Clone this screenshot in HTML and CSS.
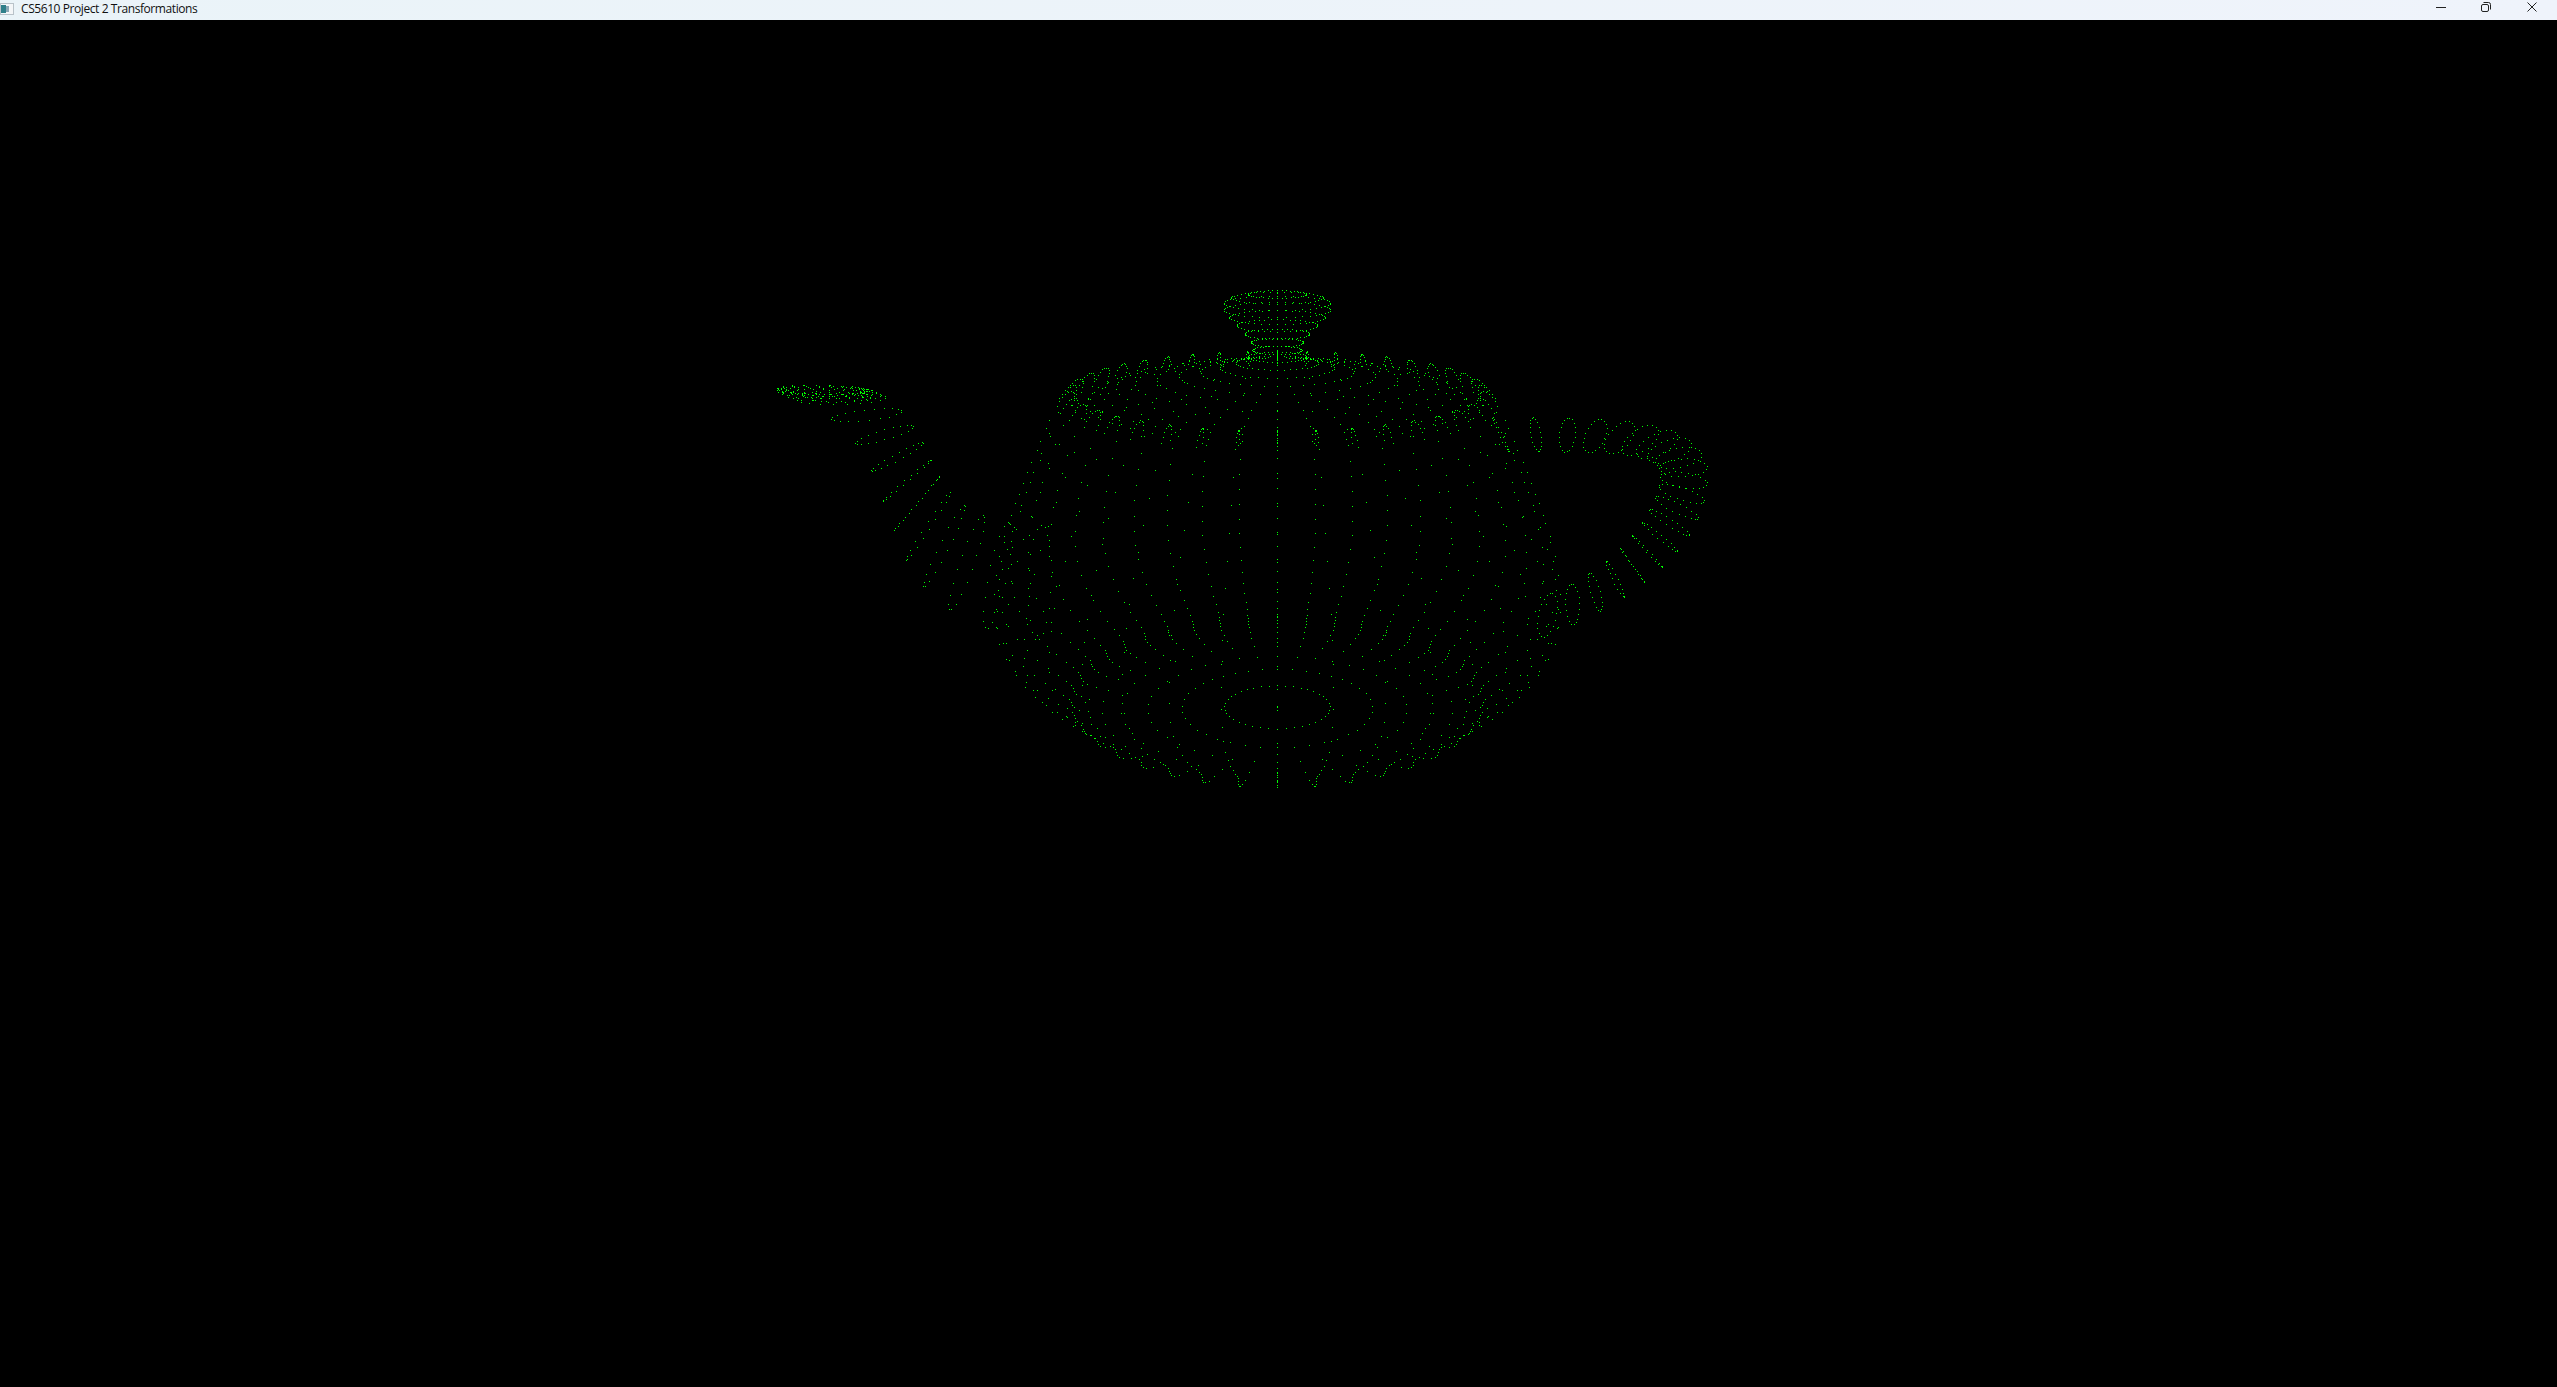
FILE: index.html
```html
<!DOCTYPE html>
<html lang="en">
<head>
<meta charset="utf-8">
<title>CS5610 Project 2 Transformations</title>
<link rel="stylesheet" href="styles.css">
</head>
<body>
<div class="window">
  <header class="titlebar">
    <div class="title-left">
      <svg class="app-icon" width="14" height="14" viewBox="0 0 14 14">
        <rect x="0.5" y="1.5" width="13" height="11" fill="#f4f6f8" stroke="#b9c2c9"/>
        <rect x="1" y="3" width="5" height="8" fill="#2f7f8a"/>
        <rect x="6" y="4" width="3" height="6" fill="#8aa7b5"/>
      </svg>
      <span class="title-text">CS5610 Project 2 Transformations</span>
    </div>
    <div class="controls">
      <svg class="ctl" width="46" height="20" viewBox="0 0 46 20"><path d="M18 7.5H28" stroke="#222" fill="none"/></svg>
      <svg class="ctl" width="46" height="20" viewBox="0 0 46 20"><path d="M19 4.5h4a1.5 1.5 0 0 1 1.5 1.5v4a1.5 1.5 0 0 1 -1.5 1.5h-4a1.5 1.5 0 0 1 -1.5 -1.5v-4a1.5 1.5 0 0 1 1.5 -1.5z M19.5 2.5h5a2 2 0 0 1 2 2v5" stroke="#222" fill="none"/></svg>
      <svg class="ctl" width="46" height="20" viewBox="0 0 46 20"><path d="M17.5 2.5L26.5 11.5M26.5 2.5L17.5 11.5" stroke="#222" fill="none"/></svg>
    </div>
  </header>
  <canvas id="view" class="viewport" width="2557" height="1367"></canvas>
</div>
<script src="main.js"></script>
</body>
</html>
```
FILE: styles.css
```css
html, body {
  margin: 0;
  padding: 0;
  height: 100%;
  background: #000;
  overflow: hidden;
}
.window {
  display: flex;
  flex-direction: column;
  height: 100%;
}
.titlebar {
  flex: 0 0 20px;
  height: 20px;
  display: flex;
  justify-content: space-between;
  background: linear-gradient(90deg, #eaf3f8, #eff3fb);
}
.title-left {
  display: flex;
  align-items: flex-start;
  gap: 7px;
}
.app-icon {
  margin-top: 2px;
}
.title-text {
  font: 12px/18px "Open Sans", "Noto Sans", sans-serif;
  color: #111;
  letter-spacing: -0.42px;
}
.controls {
  display: flex;
  gap: 0;
  margin-right: 1px;
}
.ctl {
  display: block;
}
.viewport {
  display: block;
  flex: 1 1 auto;
  background: #000;
}
```
FILE: main.js
```js
// Utah teapot drawn as a point cloud: every Bezier patch sampled on a regular grid.
var CAM = { cx: 1277, cy: 499, dist: 10, elev: 17, focal: 1414, target: 1.5, aspect: 0.965 };
var N = 10;
var K = 0.56;

function bez(t) {
  var s = 1 - t;
  return [s * s * s, 3 * s * s * t, 3 * s * t * t, t * t * t];
}

function samplePatch(rows, out) {
  for (var i = 0; i <= N; i++) {
    var bu = bez(i / N);
    for (var j = 0; j <= N; j++) {
      var bv = bez(j / N);
      var p = [0, 0, 0];
      for (var a = 0; a < 4; a++) {
        for (var b = 0; b < 4; b++) {
          var w = bu[a] * bv[b];
          p[0] += w * rows[a][b][0];
          p[1] += w * rows[a][b][1];
          p[2] += w * rows[a][b][2];
        }
      }
      out.push(p);
    }
  }
}

function revolve(profile, out) {
  var signs = [[1, 1], [-1, 1], [-1, -1], [1, -1]];
  signs.forEach(function (s) {
    var rows = profile.map(function (q) {
      var r = q[0], z = q[1];
      return [
        [s[0] * r, 0, z],
        [s[0] * r, s[1] * K * r, z],
        [s[0] * K * r, s[1] * r, z],
        [0, s[1] * r, z]
      ];
    });
    samplePatch(rows, out);
  });
}

function tube(rows, out) {
  [1, -1].forEach(function (s) {
    var m = rows.map(function (q) {
      return [
        [q[0], 0, q[2]],
        [q[0], s * q[4], q[2]],
        [q[1], s * q[4], q[3]],
        [q[1], 0, q[3]]
      ];
    });
    samplePatch(m, out);
  });
}

var pts = [];
revolve([[1.4, 2.4], [1.3375, 2.53125], [1.4375, 2.53125], [1.5, 2.4]], pts);
revolve([[1.5, 2.4], [1.75, 1.875], [2, 1.35], [2, 0.9]], pts);
revolve([[2, 0.9], [2, 0.45], [1.5, 0.225], [1.5, 0.15]], pts);
revolve([[0.001, 3.15], [0.8, 3.15], [0.001, 2.85], [0.2, 2.7]], pts);
revolve([[0.2, 2.7], [0.4, 2.55], [1.3, 2.55], [1.3, 2.4]], pts);
revolve([[0.001, 0], [1.425, 0], [1.5, 0.075], [1.5, 0.15]], pts);
tube([
  [-1.6, -1.5, 2.025, 2.25, 0.3],
  [-2.3, -2.5, 2.025, 2.25, 0.3],
  [-2.7, -3, 2.025, 2.25, 0.3],
  [-2.7, -3, 1.8, 1.8, 0.3]
], pts);
tube([
  [-2.7, -3, 1.8, 1.8, 0.3],
  [-2.7, -3, 1.575, 1.35, 0.3],
  [-2.5, -2.65, 1.125, 0.9375, 0.3],
  [-2, -1.9, 0.9, 0.6, 0.3]
], pts);
tube([
  [1.7, 1.7, 1.425, 0.6, 0.66],
  [2.6, 3.1, 1.425, 0.825, 0.66],
  [2.3, 2.4, 2.1, 2.025, 0.25],
  [2.7, 3.3, 2.4, 2.4, 0.25]
], pts);
tube([
  [2.7, 3.3, 2.4, 2.4, 0.25],
  [2.8, 3.525, 2.475, 2.49375, 0.25],
  [2.9, 3.45, 2.475, 2.5125, 0.15],
  [2.8, 3.2, 2.4, 2.4, 0.15]
], pts);

var canvas = document.getElementById('view');
var ctx = canvas.getContext('2d');
ctx.fillStyle = '#000';
ctx.fillRect(0, 0, canvas.width, canvas.height);
ctx.fillStyle = '#00ff00';
var e = CAM.elev * Math.PI / 180;
var ce = Math.cos(e), se = Math.sin(e);
pts.forEach(function (p) {
  var x = -p[0], y = p[1], z = p[2] - CAM.target;
  var depth = CAM.dist + y * ce - z * se;
  var up = y * se + z * ce;
  var sx = CAM.cx + CAM.focal * x / depth;
  var sy = CAM.cy - CAM.focal * CAM.aspect * up / depth;
  ctx.fillRect(Math.round(sx), Math.round(sy), 1, 1);
});
```
